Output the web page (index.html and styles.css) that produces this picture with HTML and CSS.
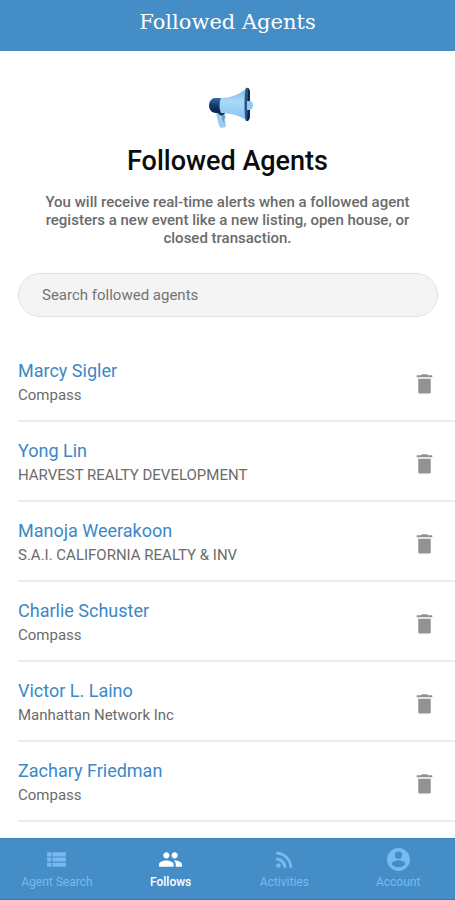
FILE: index.html
```html
<!DOCTYPE html>
<html lang="en">
<head>
<meta charset="utf-8">
<meta name="viewport" content="width=device-width, initial-scale=1">
<title>Followed Agents</title>
<link rel="stylesheet" href="styles.css">
</head>
<body>
<svg class="sprite" aria-hidden="true">
  <symbol id="trash" viewBox="0 0 24 24"><path d="M6 20.500c0 .6.400 1 1 1h10c.6 0 1-.4 1-1V7.500H6v13zM19.500 4H15.500l-1-1h-5l-1 1H4.500v2h15V4z"/></symbol>
</svg>
<header class="topbar">Followed Agents</header>
<main class="content">
  <section class="intro">
    <svg class="megaphone" viewBox="-6 0 52 42" aria-hidden="true">
      <defs>
        <linearGradient id="horn" x1="0" y1="0" x2="0" y2="1"><stop offset="0" stop-color="#7fb8e4"/><stop offset=".4" stop-color="#a9dafa"/><stop offset="1" stop-color="#86c3ef"/></linearGradient>
        <linearGradient id="cap" x1="0" y1="0" x2="0" y2="1"><stop offset="0" stop-color="#3c6ca5"/><stop offset=".5" stop-color="#16386b"/><stop offset="1" stop-color="#0b1f48"/></linearGradient>
      </defs>
      <path d="M8 26l7 1 3 2-1 4 1 7-5 1-2-2z" fill="#9bcdf0"/>
      <path d="M11 25h5l1 2-3 2-4-2z" fill="#173766"/>
      <path d="M14 28l3 1-1 4 1 5-3-6z" fill="#6c9fc8"/>
      <path d="M7 11h7v15H8C4 26 1 23 1 18.500S4 11 7 11z" fill="url(#cap)"/>
      <path d="M13 11c9 0 17-3 25-9v31c-8-5-16-7-25-7-2-4-2-11 0-15z" fill="url(#horn)"/>
      <path d="M38 1c3-1 4 3 4 7v19c0 4-1 8-4 7-2-2-2-30 0-33z" fill="#285386"/>
      <path d="M40 1c2 1 2 4 2 8v18c0 4-1 7-3 7 1-10 1-23 1-33z" fill="#0d2550"/>
      <path d="M39 14h3c4 0 4 9 0 9h-3z" fill="#91caf3"/>
    </svg>
    <h1 class="title">Followed Agents</h1>
    <p class="description">You will receive real-time alerts when a followed agent registers a new event like a new listing, open house, or closed transaction.</p>
  </section>
  <input class="search" type="search" aria-label="Search followed agents" placeholder="Search followed agents">
  <ul class="agents">
    <li class="agent"><div><a class="name" href="#">Marcy Sigler</a><p class="company">Compass</p></div><button class="remove" aria-label="Unfollow Marcy Sigler"><svg><use href="#trash"/></svg></button></li>
    <li class="agent"><div><a class="name" href="#">Yong Lin</a><p class="company">HARVEST REALTY DEVELOPMENT</p></div><button class="remove" aria-label="Unfollow Yong Lin"><svg><use href="#trash"/></svg></button></li>
    <li class="agent"><div><a class="name" href="#">Manoja Weerakoon</a><p class="company">S.A.I. CALIFORNIA REALTY &amp; INV</p></div><button class="remove" aria-label="Unfollow Manoja Weerakoon"><svg><use href="#trash"/></svg></button></li>
    <li class="agent"><div><a class="name" href="#">Charlie Schuster</a><p class="company">Compass</p></div><button class="remove" aria-label="Unfollow Charlie Schuster"><svg><use href="#trash"/></svg></button></li>
    <li class="agent"><div><a class="name" href="#">Victor L. Laino</a><p class="company">Manhattan Network Inc</p></div><button class="remove" aria-label="Unfollow Victor L. Laino"><svg><use href="#trash"/></svg></button></li>
    <li class="agent"><div><a class="name" href="#">Zachary Friedman</a><p class="company">Compass</p></div><button class="remove" aria-label="Unfollow Zachary Friedman"><svg><use href="#trash"/></svg></button></li>
  </ul>
</main>
<nav class="tabs">
  <a class="tab" href="#"><svg viewBox="0 0 24 24"><path d="M3 14h4v-4H3v4zm0 5h4v-4H3v4zM3 9h4V5H3v4zm5 5h13v-4H8v4zm0 5h13v-4H8v4zM8 5v4h13V5H8z"/></svg>Agent Search</a>
  <a class="tab active" href="#" aria-current="page"><svg viewBox="0 0 24 24"><path d="M16 11c1.660 0 2.990-1.340 2.990-3S17.660 5 16 5s-3 1.340-3 3 1.340 3 3 3zm-8 0c1.660 0 2.990-1.340 2.990-3S9.660 5 8 5 5 6.340 5 8s1.340 3 3 3zm0 2c-2.330 0-7 1.170-7 3.500V19h14v-2.500C15 14.170 10.330 13 8 13zm8 0c-.29 0-.62.020-.97.050 1.160.84 1.970 1.970 1.970 3.450V19h6v-2.500c0-2.330-4.670-3.500-7-3.500z"/></svg>Follows</a>
  <a class="tab" href="#"><svg viewBox="0 0 24 24"><circle cx="6.180" cy="17.820" r="2.180"/><path d="M4 4.440v2.830c7.030 0 12.730 5.700 12.730 12.730h2.830C19.560 11.410 12.590 4.440 4 4.440zM4 10.100v2.830c3.900 0 7.070 3.170 7.070 7.070h2.830c0-5.470-4.430-9.900-9.900-9.900z"/></svg>Activities</a>
  <a class="tab" href="#"><svg viewBox="0 0 24 24"><path d="M12 1a11 11 0 1 0 0 22 11 11 0 0 0 0-22zm0 3.300a3.500 3.500 0 1 1 0 7 3.500 3.500 0 0 1 0-7zm0 15.200c-2.800 0-5.300-1.300-6.600-3.300.1-2.200 4.400-3.400 6.600-3.400s6.500 1.200 6.600 3.400c-1.300 2-3.800 3.300-6.600 3.300z"/></svg>Account</a>
</nav>
</body>
</html>
```

FILE: styles.css
```css
* {
  box-sizing: border-box;
}

body {
  display: flex;
  flex-direction: column;
  height: 100vh;
  margin: 0;
  background: #fff;
  color: #6b6b6b;
  font-family: Roboto, "Liberation Sans", sans-serif;
}

.sprite {
  display: none;
}

.topbar {
  flex: none;
  padding: 8px 16px 15px;
  background: #458dc7;
  color: #fff;
  font-family: "Roboto Slab", "DejaVu Serif", serif;
  font-size: 21px;
  line-height: 28px;
  text-align: center;
}

.content {
  flex: 1;
  min-height: 0;
  overflow: hidden;
}

.intro {
  padding: 36px 32px 0;
  text-align: center;
}

.megaphone {
  display: block;
  width: 52px;
  height: 42px;
  margin: 0 auto;
}

.title {
  margin: 16px 0;
  color: #0c0c0c;
  font-size: 27px;
  font-weight: 500;
  line-height: 32px;
}

.description {
  margin: 0 0 26px;
  font-size: 15px;
  font-weight: 500;
  line-height: 18px;
}

.search {
  display: block;
  width: calc(100% - 35px);
  height: 44px;
  margin: 0 17px 0 18px;
  padding: 0 23px;
  border: 1px solid #e2e2e2;
  border-radius: 22px;
  outline: 0;
  background: #f4f4f4;
  color: #6b6b6b;
  font: 15px Roboto, "Liberation Sans", sans-serif;
  appearance: none;
}

.search::placeholder {
  color: #737373;
  opacity: 1;
}

.agents {
  margin: 25px 0 0;
  padding: 0 0 0 18px;
  list-style: none;
}

.agent {
  display: flex;
  align-items: center;
  justify-content: space-between;
  height: 80px;
  padding: 4px 18px 0 0;
  border-bottom: 2px solid #ebebeb;
}

.name {
  display: block;
  color: #3c87c6;
  font-size: 18px;
  line-height: 24px;
  text-decoration: none;
}

.company {
  margin: 0;
  font-size: 15px;
  line-height: 24px;
}

.remove {
  padding: 0;
  border: 0;
  background: none;
  fill: #929292;
}

.remove svg {
  display: block;
  width: 25px;
  height: 25px;
}

.tabs {
  display: grid;
  flex: none;
  grid-template-columns: repeat(4, 1fr);
  border-top: 1px solid #3b80b9;
  border-bottom: 1px solid #3379b5;
  background: #458dc7;
}

.tab {
  display: flex;
  flex-direction: column;
  align-items: center;
  gap: 2px;
  padding: 8px 0 9px;
  color: #78b9f0;
  fill: currentColor;
  font-size: 12px;
  line-height: 16px;
  text-decoration: none;
}

.tab svg {
  width: 25px;
  height: 25px;
}

.active {
  color: #fff;
  font-weight: 500;
}
```
